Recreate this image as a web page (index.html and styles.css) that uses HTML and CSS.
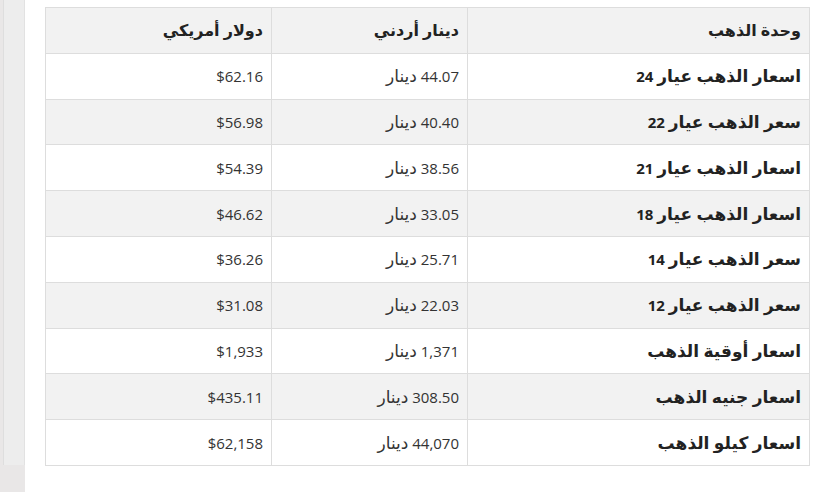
FILE: index.html
```html
<!DOCTYPE html>
<html lang="ar">
<head>
<meta charset="utf-8">
<link rel="stylesheet" href="styles.css">
</head>
<body>
<div class="page">
  <aside class="side"><div class="side-panel"></div></aside>
  <main class="main">
    <table class="prices" dir="rtl">
      <colgroup><col class="c1"><col class="c2"><col class="c3"></colgroup>
      <thead>
        <tr><th><span class="ar">وحدة الذهب</span></th><th><span class="ar">دينار أردني</span></th><th><span class="ar">دولار أمريكي</span></th></tr>
      </thead>
      <tbody>
        <tr><td class="name"><span class="ar">اسعار الذهب عيار</span> 24</td><td>44.07 <span class="ar">دينار</span></td><td>$62.16</td></tr>
        <tr><td class="name"><span class="ar">سعر الذهب عيار</span> 22</td><td>40.40 <span class="ar">دينار</span></td><td>$56.98</td></tr>
        <tr><td class="name"><span class="ar">اسعار الذهب عيار</span> 21</td><td>38.56 <span class="ar">دينار</span></td><td>$54.39</td></tr>
        <tr><td class="name"><span class="ar">اسعار الذهب عيار</span> 18</td><td>33.05 <span class="ar">دينار</span></td><td>$46.62</td></tr>
        <tr><td class="name"><span class="ar">سعر الذهب عيار</span> 14</td><td>25.71 <span class="ar">دينار</span></td><td>$36.26</td></tr>
        <tr><td class="name"><span class="ar">سعر الذهب عيار</span> 12</td><td>22.03 <span class="ar">دينار</span></td><td>$31.08</td></tr>
        <tr><td class="name"><span class="ar">اسعار أوقية الذهب</span></td><td>1,371 <span class="ar">دينار</span></td><td>$1,933</td></tr>
        <tr><td class="name"><span class="ar">اسعار جنيه الذهب</span></td><td>308.50 <span class="ar">دينار</span></td><td>$435.11</td></tr>
        <tr><td class="name"><span class="ar">اسعار كيلو الذهب</span></td><td>44,070 <span class="ar">دينار</span></td><td>$62,158</td></tr>
      </tbody>
    </table>
  </main>
</div>
</body>
</html>
```
FILE: styles.css
```css
html, body {
  margin: 0;
  padding: 0;
  background: #fff;
}
body {
  font-family: "Open Sans", "DejaVu Sans", sans-serif;
  font-size: 15px;
  color: #222;
}
.page {
  display: flex;
  height: 492px;
}
.side {
  flex: 0 0 25px;
  background: #e9e7e7;
  display: flex;
  flex-direction: column;
}
.side-panel {
  margin-left: 3px;
  height: 465px;
  background: #ededed;
  border-left: 1px solid #dedede;
  border-right: 1px solid #e2e2e2;
}
.main {
  flex: 0 0 auto;
  padding: 7px 0 0 20px;
}
.prices {
  border-collapse: collapse;
  width: 764px;
  table-layout: fixed;
}
.c1 { width: 342px; }
.c2 { width: 196px; }
.c3 { width: 226px; }
.prices tr {
  height: 45.8px;
}
.prices th, .prices td {
  border: 1px solid #dddddd;
  padding: 0 8px;
  text-align: right;
  line-height: 20px;
  white-space: nowrap;
}
.ar {
  font-size: 17px;
}
.prices th .ar {
  font-size: 16px;
}
.prices th {
  background: #f2f2f2;
  font-weight: 700;
  color: #222;
}
.prices td.name {
  font-weight: 700;
  color: #222;
}
.prices tbody tr:nth-child(even) td {
  background: #f2f2f2;
}
.prices td {
  color: #333;
}
```
